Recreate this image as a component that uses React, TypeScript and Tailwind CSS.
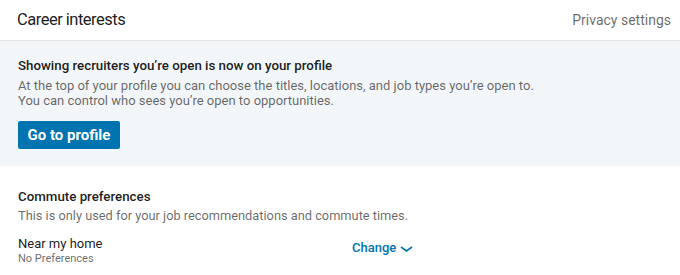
export default function App() {
  return (
    <div className="w-[680px] h-[275px] overflow-hidden bg-white text-[#000000e6] font-['Roboto','Liberation_Sans',sans-serif]">
      <header className="flex h-[41px] items-center justify-between border-b border-[#e0e0e0] pl-[17px] pr-[9px]">
        <h1 className="text-[16.5px] font-normal leading-none tracking-[-0.5px] text-[#000000e6]">Career interests</h1>
        <a className="text-[14px] font-normal text-[#00000099]">Privacy settings</a>
      </header>

      <section className="h-[125px] bg-[#f3f6f8] px-[18px] pt-[17px]">
        <p className="text-[13.3px] font-medium leading-[16px]">Showing recruiters you’re open is now on your profile</p>
        <p className="text-[13px] leading-[15px] text-[#00000099] mt-[4px]">
          At the top of your profile you can choose the titles, locations, and job types you’re open to.
          <br />
          You can control who sees you’re open to opportunities.
        </p>
        <button className="mt-[13px] h-[28px] w-[102px] rounded-[2px] bg-[#0073b1] text-[15px] font-bold text-white">
          Go to profile
        </button>
      </section>

      <section className="px-[18px] pt-[23px]">
        <p className="text-[13.3px] font-medium leading-[16px]">Commute preferences</p>
        <p className="mt-[3px] text-[12.8px] leading-[16px] text-[#00000099]">This is only used for your job recommendations and commute times.</p>
        <div className="mt-[12px] flex">
          <div className="w-[334px]">
            <p className="text-[13px] leading-[15px]">Near my home</p>
            <p className="text-[11px] leading-[15px] text-[#00000099]">No Preferences</p>
          </div>
          <button className="flex h-[24px] items-center gap-[4px] text-[13px] font-medium text-[#0073b1]">
            Change
            <svg width="13" height="9" viewBox="0 0 13 9" fill="none">
              <path d="M1 3l5.5 4 5.5-4" stroke="currentColor" strokeWidth="1.6" />
            </svg>
          </button>
        </div>
      </section>
    </div>
  );
}
